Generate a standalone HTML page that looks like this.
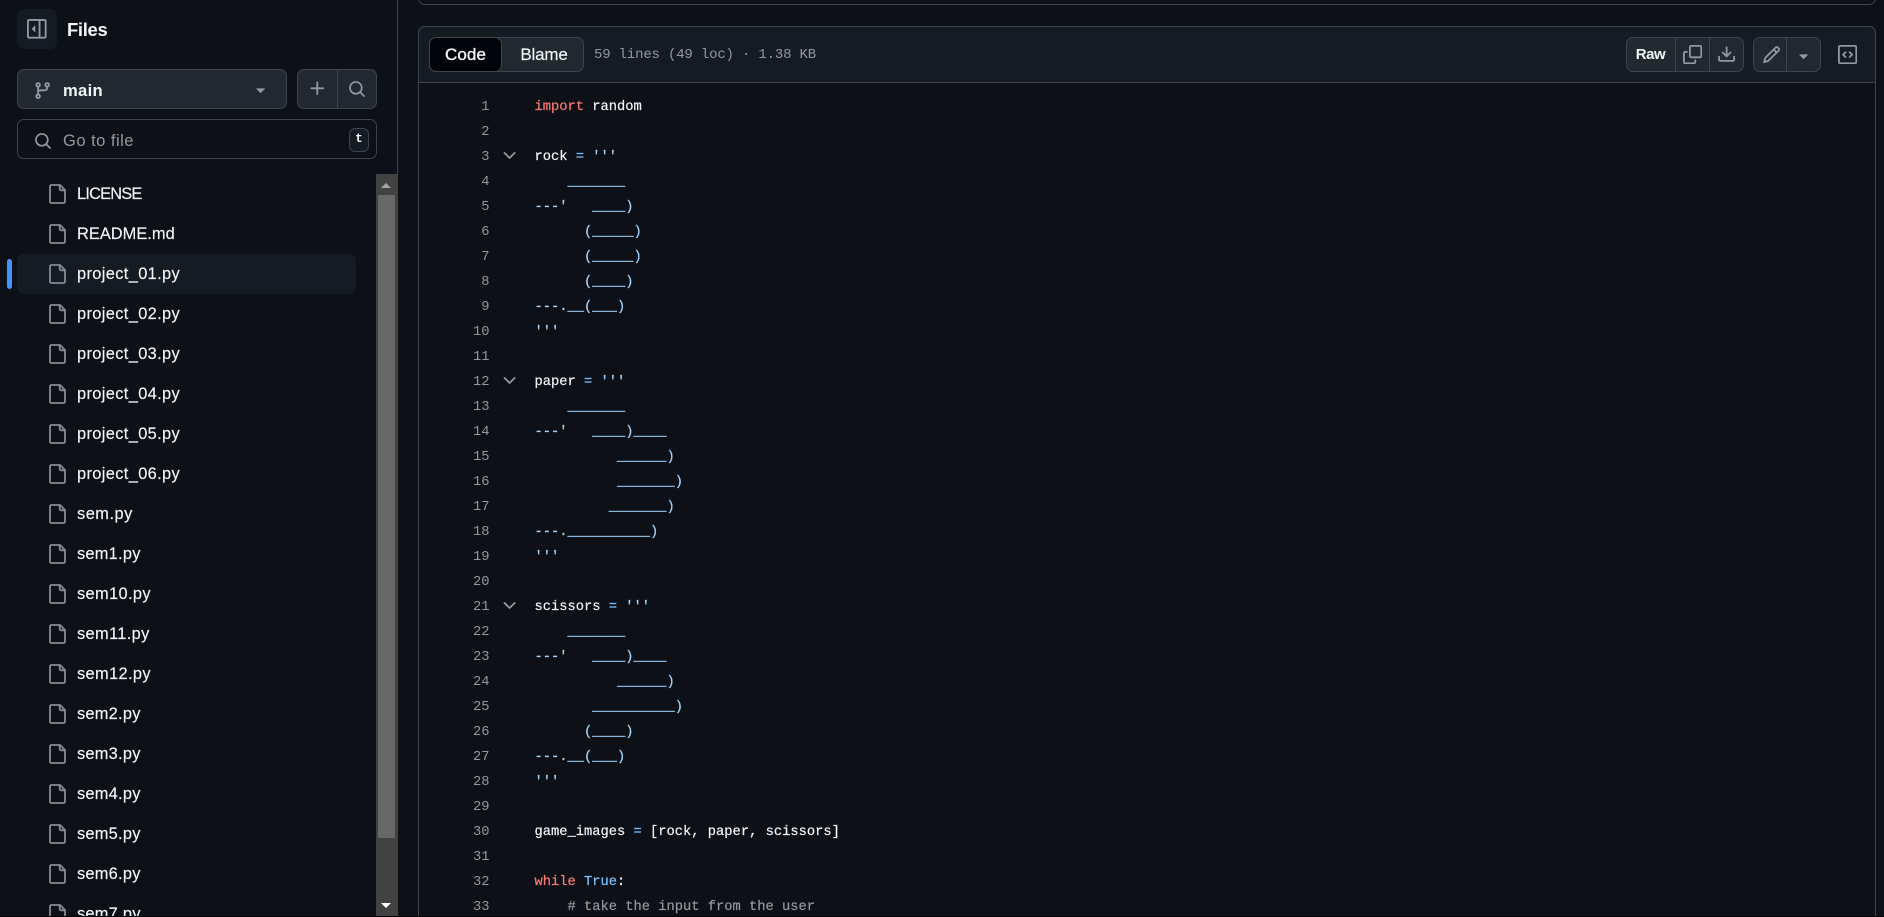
<!DOCTYPE html>
<html><head><meta charset="utf-8"><title>project_01.py</title>
<style>
html,body{margin:0;padding:0;width:1884px;height:917px;overflow:hidden;background:#0d1117}
body{position:relative;font-family:"Liberation Sans",sans-serif;color:#f0f6fc}
.a{position:absolute;box-sizing:border-box}
svg{display:block;fill:currentColor}
.ic{position:absolute;color:#9198a1}
.fi{position:absolute;left:49px;fill:none;stroke:#858b94;stroke-width:1.8;stroke-linejoin:round}
.f{position:absolute;left:77px;font-size:16.4px;line-height:24px;color:#f0f6fc;white-space:nowrap;-webkit-text-stroke:.15px #f0f6fc}
.p{letter-spacing:.36px}.q{letter-spacing:.24px}.r{letter-spacing:.35px}
pre{margin:0;font-family:"Liberation Mono",monospace;font-size:13.75px;line-height:25px}
.s{color:#a5d6ff}.k{color:#ff7b72}.c{color:#79c0ff}.m{color:#9198a1}
#nums{position:absolute;left:440px;top:94.5px;width:49.5px;text-align:right;color:#9198a1}
#code{position:absolute;left:534.5px;top:94.5px;color:#f0f6fc;-webkit-text-stroke:.2px}
</style></head><body>
<svg width="0" height="0" style="position:absolute"><defs>
<symbol id="file" viewBox="0 0 17 20"><path d="M2.5 1H11L16 6V17.5a1.5 1.5 0 0 1-1.5 1.5H2.5A1.5 1.5 0 0 1 1 17.5V2.5A1.5 1.5 0 0 1 2.5 1Z"/><path d="M10.7 1.2V5a1.3 1.3 0 0 0 1.3 1.3H15.8"/></symbol>
<symbol id="search" viewBox="0 0 16 16"><path d="M10.68 11.74a6 6 0 0 1-7.922-8.982 6 6 0 0 1 8.982 7.922l3.04 3.04a.749.749 0 0 1-.326 1.275.749.749 0 0 1-.734-.215ZM11.5 7a4.499 4.499 0 1 0-8.997 0A4.499 4.499 0 0 0 11.5 7Z"/></symbol>
<symbol id="chev" viewBox="0 0 16 16"><path d="M12.78 5.22a.749.749 0 0 1 0 1.06l-4.25 4.25a.749.749 0 0 1-1.06 0L3.22 6.28a.749.749 0 1 1 1.06-1.06L8 8.939l3.72-3.719a.749.749 0 0 1 1.06 0Z"/></symbol>
<symbol id="tri" viewBox="0 0 16 16"><path d="m4.427 7.427 3.396 3.396a.25.25 0 0 0 .354 0l3.396-3.396A.25.25 0 0 0 11.396 7H4.604a.25.25 0 0 0-.177.427Z"/></symbol>
</defs></svg>

<!-- sidebar -->
<div class="a" style="left:397px;top:0;width:1px;height:917px;background:#3d444d"></div>
<div class="a" style="left:17px;top:9px;width:40px;height:40px;background:#151b23;border-radius:7px"></div>
<svg class="ic" style="left:27px;top:19px" width="19.6" height="19.6" viewBox="0 0 16 16"><path d="M6.75 5.604v4.792a.25.25 0 0 1-.427.177L3.927 8.177a.25.25 0 0 1 0-.354l2.396-2.396a.25.25 0 0 1 .427.177Z"/><path d="M1.75 0h12.5C15.216 0 16 .784 16 1.75v12.5A1.75 1.75 0 0 1 14.25 16H1.75A1.75 1.75 0 0 1 0 14.25V1.75C0 .784.784 0 1.75 0ZM1.5 1.75v12.5c0 .138.112.25.25.25H9.5v-13H1.75a.25.25 0 0 0-.25.25ZM11 14.5h3.25a.25.25 0 0 0 .25-.25V1.75a.25.25 0 0 0-.25-.25H11Z"/></svg>
<div class="a" style="left:67px;top:18px;font-size:18.4px;line-height:24px;font-weight:700;letter-spacing:-.3px">Files</div>

<div class="a" style="left:17px;top:69px;width:270px;height:40px;background:#212830;border:1px solid #3d444d;border-radius:7px"></div>
<svg class="ic" style="left:33px;top:81px" width="19.2" height="19.2" viewBox="0 0 16 16"><path d="M9.5 3.25a2.25 2.25 0 1 1 3 2.122V6A2.5 2.5 0 0 1 10 8.5H6a1 1 0 0 0-1 1v1.128a2.251 2.251 0 1 1-1.5 0V5.372a2.25 2.25 0 1 1 1.5 0v1.836A2.493 2.493 0 0 1 6 7h4a1 1 0 0 0 1-1v-.628A2.25 2.25 0 0 1 9.5 3.25Zm-6 0a.75.75 0 1 0 1.5 0 .75.75 0 0 0-1.5 0Zm8.25-.75a.75.75 0 1 0 0 1.5.75.75 0 0 0 0-1.5ZM4.25 12a.75.75 0 1 0 0 1.5.75.75 0 0 0 0-1.5Z"/></svg>
<div class="a" style="left:63px;top:80px;font-size:16.6px;line-height:22px;font-weight:700;letter-spacing:.3px">main</div>
<svg class="ic" style="left:251px;top:80px" width="19.2" height="19.2"><use href="#tri"/></svg>

<div class="a" style="left:297px;top:69px;width:80px;height:40px;background:#212830;border:1px solid #3d444d;border-radius:7px"></div>
<div class="a" style="left:337px;top:70px;width:1px;height:38px;background:#3d444d"></div>
<svg class="ic" style="left:308px;top:79px" width="19.2" height="19.2" viewBox="0 0 16 16"><path d="M7.75 2a.75.75 0 0 1 .75.75V7h4.25a.75.75 0 0 1 0 1.5H8.5v4.25a.75.75 0 0 1-1.5 0V8.5H2.75a.75.75 0 0 1 0-1.5H7V2.75A.75.75 0 0 1 7.75 2Z"/></svg>
<svg class="ic" style="left:348px;top:80px" width="18" height="18"><use href="#search"/></svg>

<div class="a" style="left:17px;top:119px;width:360px;height:40px;border:1px solid #3d444d;border-radius:7px"></div>
<svg class="ic" style="left:34px;top:132px" width="18" height="18"><use href="#search"/></svg>
<div class="a" style="left:63px;top:129px;font-size:16.6px;line-height:24px;color:#9198a1;letter-spacing:.45px">Go to file</div>
<div class="a" style="left:349px;top:128px;width:20px;height:24px;background:#151b23;border:1px solid #3d444d;border-radius:6px;text-align:center;font:700 12.5px/20px 'Liberation Mono',monospace;color:#f0f6fc">t</div>

<div class="a" style="left:17px;top:254px;width:339px;height:40px;background:#151b23;border-radius:7px"></div>
<div class="a" style="left:7px;top:259px;width:5px;height:30px;background:#4493f8;border-radius:3px"></div>

<div class="a" style="left:0;top:170px;width:376px;height:746px;overflow:hidden">
<svg class="fi" style="top:14px" width="17" height="20"><use href="#file"/></svg><div class="f" style="top:12px;letter-spacing:-.8px">LICENSE</div>
<svg class="fi" style="top:54px" width="17" height="20"><use href="#file"/></svg><div class="f" style="top:52px;letter-spacing:.03px">README.md</div>
<svg class="fi" style="top:94px" width="17" height="20"><use href="#file"/></svg><div class="f p" style="top:92px">project_01.py</div>
<svg class="fi" style="top:134px" width="17" height="20"><use href="#file"/></svg><div class="f p" style="top:132px">project_02.py</div>
<svg class="fi" style="top:174px" width="17" height="20"><use href="#file"/></svg><div class="f p" style="top:172px">project_03.py</div>
<svg class="fi" style="top:214px" width="17" height="20"><use href="#file"/></svg><div class="f p" style="top:212px">project_04.py</div>
<svg class="fi" style="top:254px" width="17" height="20"><use href="#file"/></svg><div class="f p" style="top:252px">project_05.py</div>
<svg class="fi" style="top:294px" width="17" height="20"><use href="#file"/></svg><div class="f p" style="top:292px">project_06.py</div>
<svg class="fi" style="top:334px" width="17" height="20"><use href="#file"/></svg><div class="f" style="top:332px;letter-spacing:.5px">sem.py</div>
<svg class="fi" style="top:374px" width="17" height="20"><use href="#file"/></svg><div class="f q" style="top:372px">sem1.py</div>
<svg class="fi" style="top:414px" width="17" height="20"><use href="#file"/></svg><div class="f r" style="top:412px">sem10.py</div>
<svg class="fi" style="top:454px" width="17" height="20"><use href="#file"/></svg><div class="f r" style="top:452px">sem11.py</div>
<svg class="fi" style="top:494px" width="17" height="20"><use href="#file"/></svg><div class="f r" style="top:492px">sem12.py</div>
<svg class="fi" style="top:534px" width="17" height="20"><use href="#file"/></svg><div class="f q" style="top:532px">sem2.py</div>
<svg class="fi" style="top:574px" width="17" height="20"><use href="#file"/></svg><div class="f q" style="top:572px">sem3.py</div>
<svg class="fi" style="top:614px" width="17" height="20"><use href="#file"/></svg><div class="f q" style="top:612px">sem4.py</div>
<svg class="fi" style="top:654px" width="17" height="20"><use href="#file"/></svg><div class="f q" style="top:652px">sem5.py</div>
<svg class="fi" style="top:694px" width="17" height="20"><use href="#file"/></svg><div class="f q" style="top:692px">sem6.py</div>
<svg class="fi" style="top:734px" width="17" height="20"><use href="#file"/></svg><div class="f q" style="top:732px">sem7.py</div>
</div>

<!-- scrollbar -->
<div class="a" style="left:376px;top:174px;width:21px;height:743px;background:#424242"></div>
<div class="a" style="left:378px;top:195px;width:17px;height:643px;background:#686868"></div>
<div class="a" style="left:381px;top:183px;width:0;height:0;border-left:5px solid transparent;border-right:5px solid transparent;border-bottom:5px solid #a3a3a3"></div>
<div class="a" style="left:381px;top:903px;width:0;height:0;border-left:5px solid transparent;border-right:5px solid transparent;border-top:5px solid #fff"></div>

<!-- top box remnant -->
<div class="a" style="left:418px;top:-20px;width:1458px;height:25px;border:1px solid #3d444d;border-radius:7px"></div>

<!-- code box -->
<div class="a" style="left:418px;top:26px;width:1458px;height:910px;border:1px solid #3d444d;border-radius:7px;background:#0d1117"></div>
<div class="a" style="left:418px;top:26px;width:1458px;height:57px;background:#151b23;border:1px solid #3d444d;border-radius:7px 7px 0 0"></div>

<div class="a" style="left:429px;top:37px;width:155px;height:35px;background:#212830;border:1px solid #3d444d;border-radius:7px"></div>
<div class="a" style="left:429px;top:37px;width:73px;height:35px;background:#010409;border:1px solid #3d444d;border-radius:7px;text-align:center;font-size:17px;line-height:34px;letter-spacing:.1px;-webkit-text-stroke:.35px #f0f6fc">Code</div>
<div class="a" style="left:503px;top:37px;width:82px;height:35px;text-align:center;font-size:17px;line-height:35px;letter-spacing:-.2px;-webkit-text-stroke:.15px #f0f6fc">Blame</div>
<pre class="a" style="left:594px;top:43px;font-size:14px;line-height:24px;color:#9198a1;letter-spacing:-.18px">59 lines (49 loc) · 1.38 KB</pre>

<div class="a" style="left:1626px;top:37px;width:118px;height:35px;background:#212830;border:1px solid #3d444d;border-radius:7px"></div>
<div class="a" style="left:1675px;top:38px;width:1px;height:33px;background:#3d444d"></div>
<div class="a" style="left:1709px;top:38px;width:1px;height:33px;background:#3d444d"></div>
<div class="a" style="left:1626px;top:37px;width:49px;height:35px;text-align:center;font-size:15px;line-height:35px;font-weight:700;letter-spacing:-.45px">Raw</div>
<svg class="ic" style="left:1683px;top:45px" width="19.2" height="19.2" viewBox="0 0 16 16"><path d="M0 6.75C0 5.784.784 5 1.75 5h1.5a.75.75 0 0 1 0 1.5h-1.5a.25.25 0 0 0-.25.25v7.5c0 .138.112.25.25.25h7.5a.25.25 0 0 0 .25-.25v-1.5a.75.75 0 0 1 1.5 0v1.5A1.75 1.75 0 0 1 9.25 16h-7.5A1.75 1.75 0 0 1 0 14.25Z"/><path d="M5 1.75C5 .784 5.784 0 6.75 0h7.5C15.216 0 16 .784 16 1.75v7.5A1.75 1.75 0 0 1 14.25 11h-7.5A1.75 1.75 0 0 1 5 9.25Zm1.75-.25a.25.25 0 0 0-.25.25v7.5c0 .138.112.25.25.25h7.5a.25.25 0 0 0 .25-.25v-7.5a.25.25 0 0 0-.25-.25Z"/></svg>
<svg class="ic" style="left:1717px;top:45px" width="19.2" height="19.2" viewBox="0 0 16 16"><path d="M2.75 14A1.75 1.75 0 0 1 1 12.25v-2.5a.75.75 0 0 1 1.5 0v2.5c0 .138.112.25.25.25h10.5a.25.25 0 0 0 .25-.25v-2.5a.75.75 0 0 1 1.5 0v2.5A1.75 1.75 0 0 1 13.25 14Z"/><path d="M7.25 7.689V2a.75.75 0 0 1 1.5 0v5.689l1.97-1.969a.749.749 0 1 1 1.06 1.06l-3.25 3.25a.749.749 0 0 1-1.06 0L4.22 6.78a.749.749 0 1 1 1.06-1.06l1.97 1.969Z"/></svg>

<div class="a" style="left:1753px;top:37px;width:68px;height:35px;background:#212830;border:1px solid #3d444d;border-radius:7px"></div>
<div class="a" style="left:1786px;top:38px;width:1px;height:33px;background:#3d444d"></div>
<svg class="ic" style="left:1762px;top:45px" width="19.2" height="19.2" viewBox="0 0 16 16"><path d="M11.013 1.427a1.75 1.75 0 0 1 2.474 0l1.086 1.086a1.75 1.75 0 0 1 0 2.474l-8.61 8.61c-.21.21-.47.364-.756.445l-3.251.93a.75.75 0 0 1-.927-.928l.929-3.25c.081-.286.235-.547.445-.758l8.61-8.61Zm.176 4.823L9.75 4.81l-6.286 6.287a.253.253 0 0 0-.064.108l-.558 1.953 1.953-.558a.253.253 0 0 0 .108-.064Zm1.238-3.763a.25.25 0 0 0-.354 0L10.811 3.75l1.439 1.44 1.263-1.263a.25.25 0 0 0 0-.354Z"/></svg>
<svg class="ic" style="left:1794px;top:46px" width="19.2" height="19.2"><use href="#tri"/></svg>
<svg class="ic" style="left:1838px;top:45px" width="19.2" height="19.2" viewBox="0 0 16 16"><path d="M0 1.75C0 .784.784 0 1.75 0h12.5C15.216 0 16 .784 16 1.75v12.5A1.75 1.75 0 0 1 14.25 16H1.75A1.75 1.75 0 0 1 0 14.25Zm1.75-.25a.25.25 0 0 0-.25.25v12.5c0 .138.112.25.25.25h12.5a.25.25 0 0 0 .25-.25V1.75a.25.25 0 0 0-.25-.25Zm7.47 3.97a.75.75 0 0 1 1.06 0l2 2a.75.75 0 0 1 0 1.06l-2 2a.749.749 0 0 1-1.275-.326.749.749 0 0 1 .215-.734L10.69 8 9.22 6.53a.75.75 0 0 1 0-1.06ZM6.78 6.53 5.31 8l1.47 1.47a.749.749 0 0 1-.326 1.275.749.749 0 0 1-.734-.215l-2-2a.75.75 0 0 1 0-1.06l2-2a.751.751 0 0 1 1.06 0 .75.75 0 0 1 0 1.06Z"/></svg>

<!-- code -->
<pre id="nums">1
2
3
4
5
6
7
8
9
10
11
12
13
14
15
16
17
18
19
20
21
22
23
24
25
26
27
28
29
30
31
32
33</pre>
<svg class="ic" style="left:500px;top:146px" width="19.2" height="19.2"><use href="#chev"/></svg>
<svg class="ic" style="left:500px;top:371px" width="19.2" height="19.2"><use href="#chev"/></svg>
<svg class="ic" style="left:500px;top:596px" width="19.2" height="19.2"><use href="#chev"/></svg>
<pre id="code"><span class="k">import</span> random

rock <span class="c">=</span> <span class="s">'''
    _______
---'   ____)
      (_____)
      (_____)
      (____)
---.__(___)
'''</span>

paper <span class="c">=</span> <span class="s">'''
    _______
---'   ____)____
          ______)
          _______)
         _______)
---.__________)
'''</span>

scissors <span class="c">=</span> <span class="s">'''
    _______
---'   ____)____
          ______)
       __________)
      (____)
---.__(___)
'''</span>

game_images <span class="c">=</span> [rock, paper, scissors]

<span class="k">while</span> <span class="c">True</span>:
    <span class="m"># take the input from the user</span></pre>

<div class="a" style="left:0;top:916px;width:1884px;height:1px;background:#000"></div>
</body></html>
